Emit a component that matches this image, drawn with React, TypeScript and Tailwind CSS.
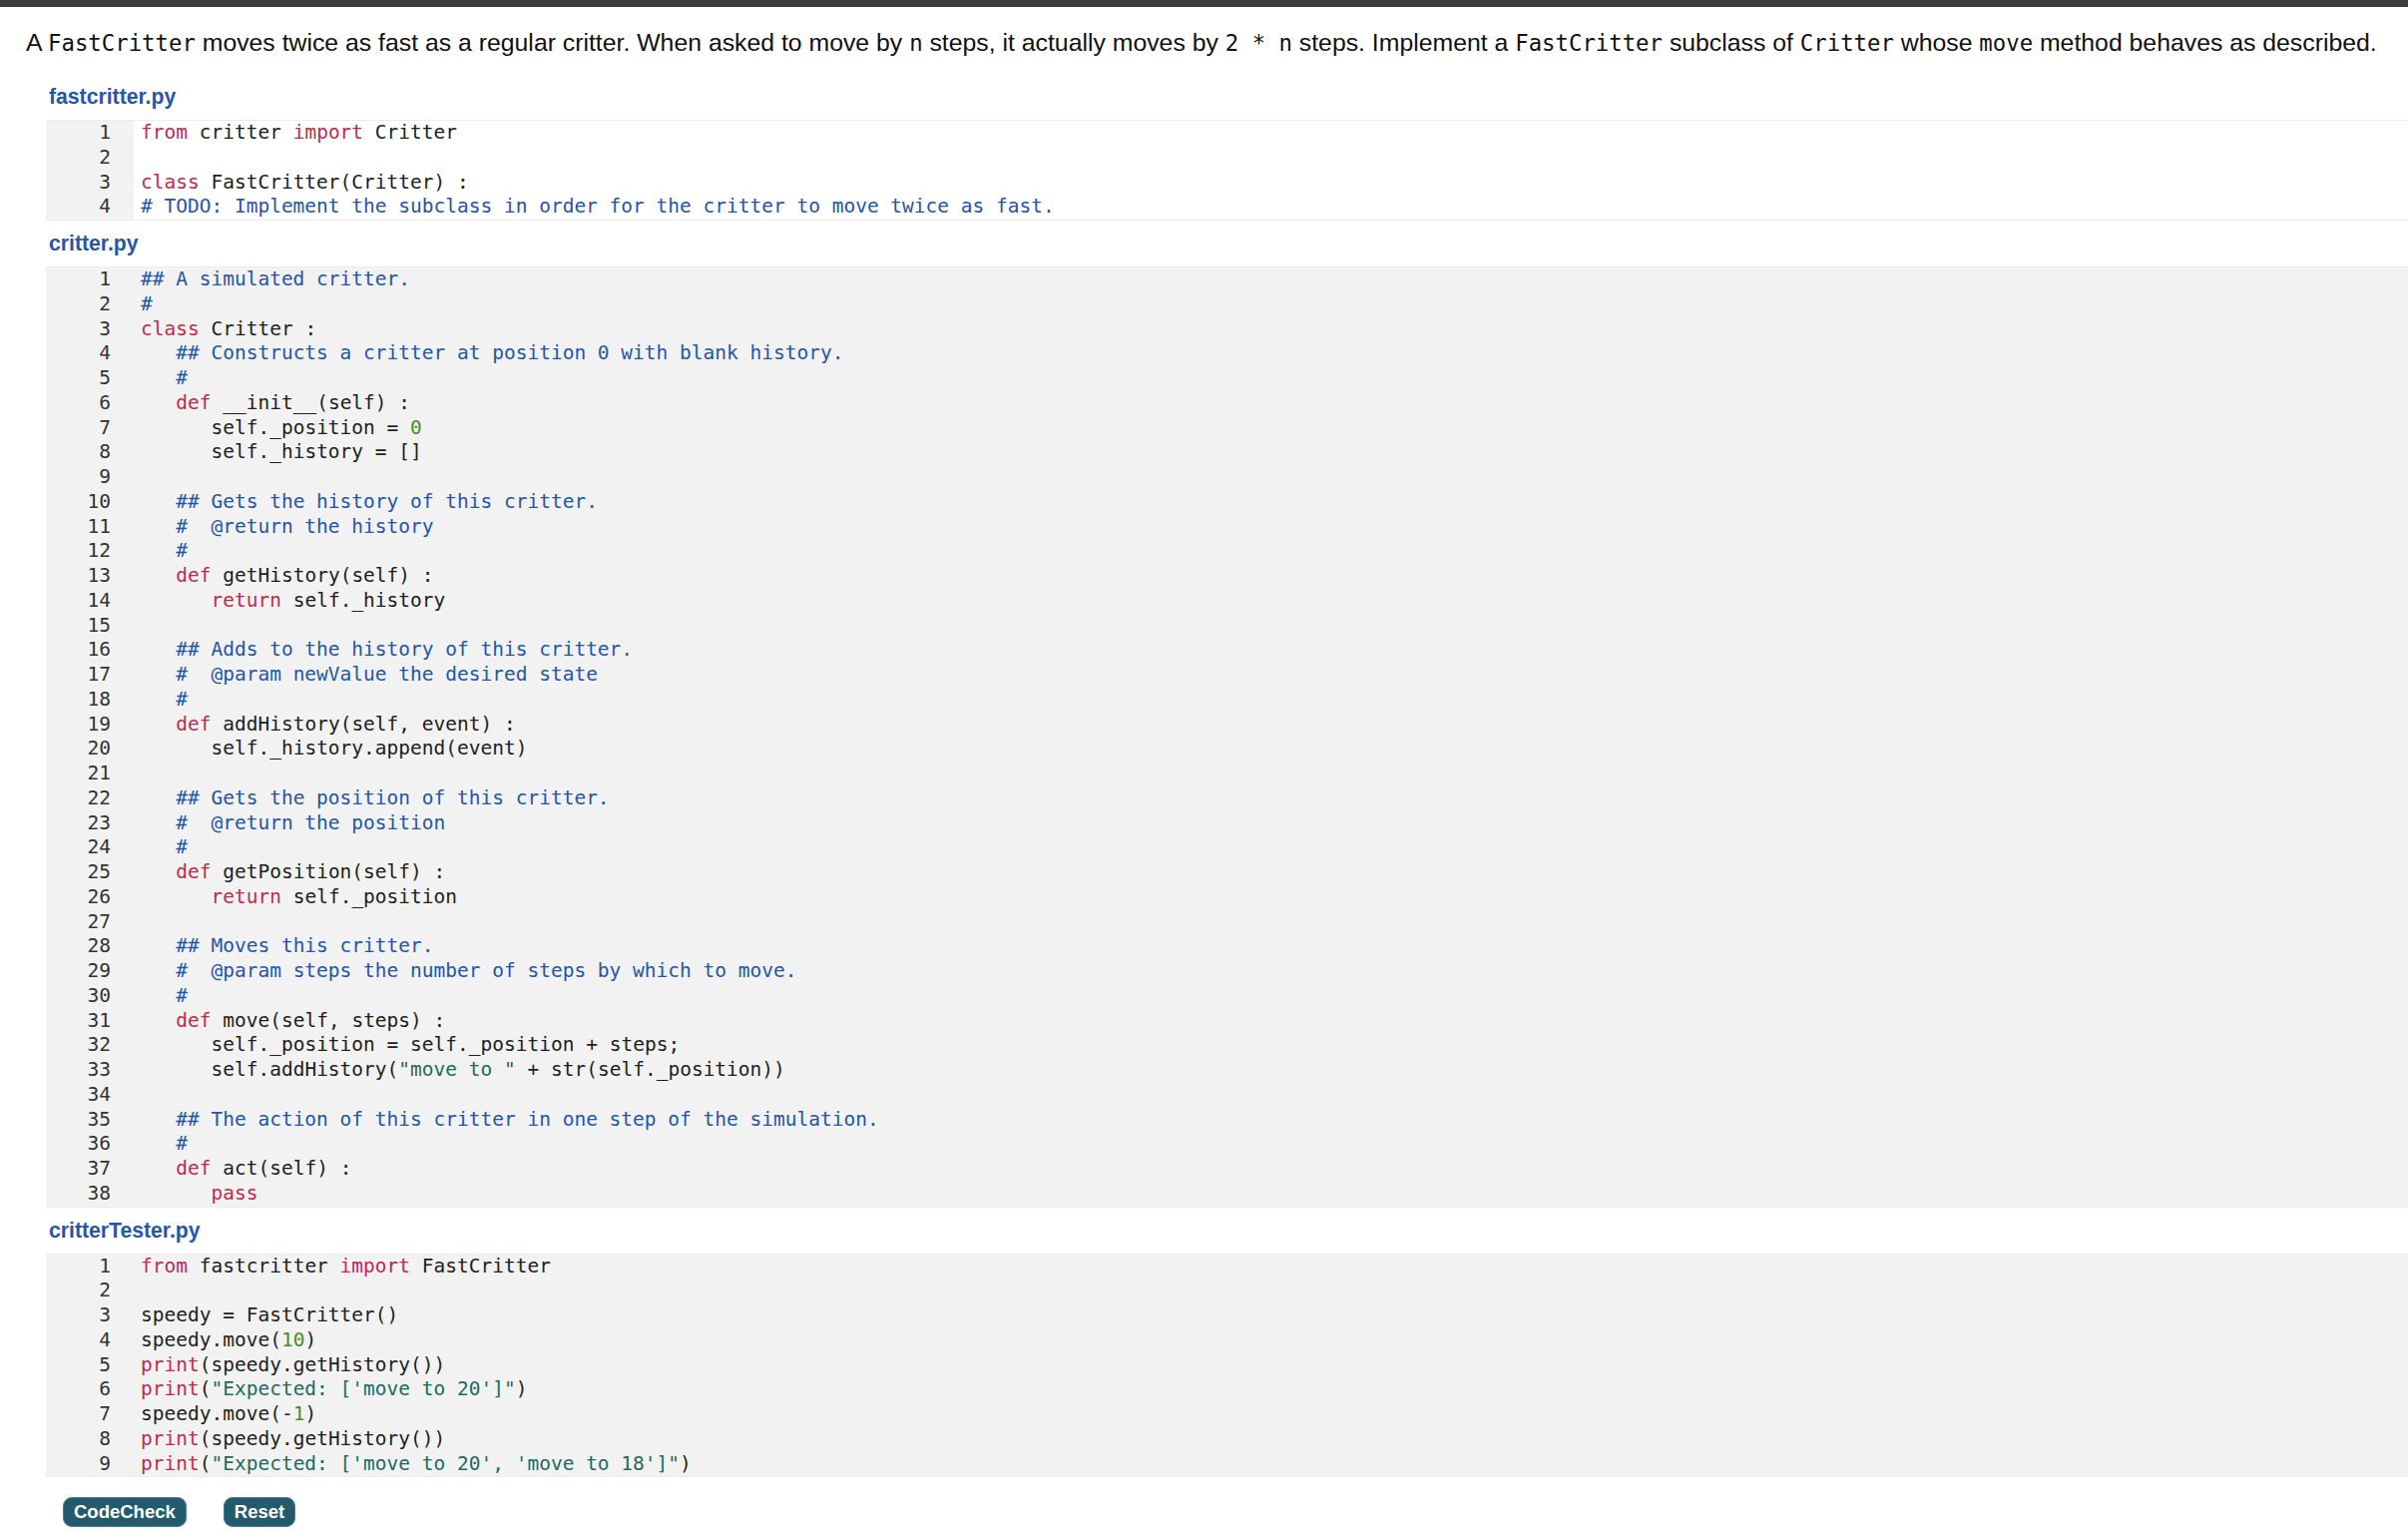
import React from "react";

type CodeFile = {
  name: string;
  editable?: boolean;
  lines: string[];
};

const files: CodeFile[] = [
  {
    name: "fastcritter.py",
    editable: true,
    lines: [
      "from critter import Critter",
      "",
      "class FastCritter(Critter) :",
      "# TODO: Implement the subclass in order for the critter to move twice as fast.",
    ],
  },
  {
    name: "critter.py",
    lines: [
      "## A simulated critter.",
      "#",
      "class Critter :",
      "   ## Constructs a critter at position 0 with blank history.",
      "   #",
      "   def __init__(self) :",
      "      self._position = 0",
      "      self._history = []",
      "",
      "   ## Gets the history of this critter.",
      "   #  @return the history",
      "   #",
      "   def getHistory(self) :",
      "      return self._history",
      "",
      "   ## Adds to the history of this critter.",
      "   #  @param newValue the desired state",
      "   #",
      "   def addHistory(self, event) :",
      "      self._history.append(event)",
      "",
      "   ## Gets the position of this critter.",
      "   #  @return the position",
      "   #",
      "   def getPosition(self) :",
      "      return self._position",
      "",
      "   ## Moves this critter.",
      "   #  @param steps the number of steps by which to move.",
      "   #",
      "   def move(self, steps) :",
      "      self._position = self._position + steps;",
      '      self.addHistory("move to " + str(self._position))',
      "",
      "   ## The action of this critter in one step of the simulation.",
      "   #",
      "   def act(self) :",
      "      pass",
    ],
  },
  {
    name: "critterTester.py",
    lines: [
      "from fastcritter import FastCritter",
      "",
      "speedy = FastCritter()",
      "speedy.move(10)",
      "print(speedy.getHistory())",
      "print(\"Expected: ['move to 20']\")",
      "speedy.move(-1)",
      "print(speedy.getHistory())",
      "print(\"Expected: ['move to 20', 'move to 18']\")",
    ],
  },
];

const keywords = new Set(["from", "import", "class", "def", "return", "pass", "print"]);

const tokenColor: Record<string, string> = {
  kw: "text-[#c02a50]",
  comment: "text-[#2356a8]",
  str: "text-[#1c6b60]",
  num: "text-[#4a8a26]",
  plain: "text-[#1e1e1e]",
};

// very small python highlighter, good enough for these snippets
const highlight = (line: string) => {
  const out: { text: string; kind: string }[] = [];
  const re = /(#.*$)|("[^"]*")|(\b\d+\b)|([A-Za-z_]\w*)|([^#"A-Za-z_\d]+)/g;
  let m: RegExpExecArray | null;
  while ((m = re.exec(line)) !== null) {
    if (m[1]) out.push({ text: m[1], kind: "comment" });
    else if (m[2]) out.push({ text: m[2], kind: "str" });
    else if (m[3]) out.push({ text: m[3], kind: "num" });
    else if (m[4]) out.push({ text: m[4], kind: keywords.has(m[4]) ? "kw" : "plain" });
    else out.push({ text: m[0], kind: "plain" });
  }
  return out;
};

const Code = ({ children }: { children: React.ReactNode }) => (
  <code className="font-['DejaVu_Sans_Mono','Liberation_Mono',monospace] text-[0.9em]">{children}</code>
);

const CodeBlock = ({ file }: { file: CodeFile }) => (
  <div>
    <div className="pl-[3px] pt-[11px] pb-[11px] text-[21.2px] leading-[24px] font-bold text-[#2457a6]">
      {file.name}
    </div>
    <div
      className={`flex border-y border-[#ececec] font-['DejaVu_Sans_Mono','Liberation_Mono',monospace] text-[19.5px] leading-[24.75px] ${
        file.editable ? "bg-white" : "bg-[#f2f2f2]"
      }`}
    >
      <div className="w-[88px] shrink-0 bg-[#f2f2f2] pr-[23px] text-right text-[#333]">
        {file.lines.map((_, i) => (
          <div key={i}>{i + 1}</div>
        ))}
      </div>
      <div className="pl-[7px] whitespace-pre">
        {file.lines.map((line, i) => (
          <div key={i} className="h-[24.75px]">
            {highlight(line).map((t, j) => (
              <span key={j} className={tokenColor[t.kind]}>
                {t.text}
              </span>
            ))}
          </div>
        ))}
      </div>
    </div>
  </div>
);

const App = () => {
  return (
    <div className="min-h-screen w-full bg-white font-['Liberation_Sans',Arial,sans-serif] text-[#111]">
      <div className="h-[7px] bg-[#3c3c3c]" />
      <p className="mt-[21px] pl-[26px] whitespace-nowrap text-[24.8px] leading-[30px]">
        A <Code>FastCritter</Code> moves twice as fast as a regular critter. When asked to move by <Code>n</Code>{" "}
        steps, it actually moves by <Code>2 * n</Code> steps. Implement a <Code>FastCritter</Code> subclass of{" "}
        <Code>Critter</Code> whose <Code>move</Code> method behaves as described.
      </p>
      <div className="mt-[16px] pl-[46px]">
        {files.map((f) => (
          <CodeBlock key={f.name} file={f} />
        ))}
        <div className="flex gap-[37px] pl-[17px] pt-[20px]">
          <button className="h-[30px] rounded-[9px] border border-[#4a7d8e] bg-[#245a6d] px-[10px] text-[18.5px] font-bold text-white">
            CodeCheck
          </button>
          <button className="h-[30px] rounded-[9px] border border-[#4a7d8e] bg-[#245a6d] px-[10px] text-[18.5px] font-bold text-white">
            Reset
          </button>
        </div>
      </div>
    </div>
  );
};

export default App;
